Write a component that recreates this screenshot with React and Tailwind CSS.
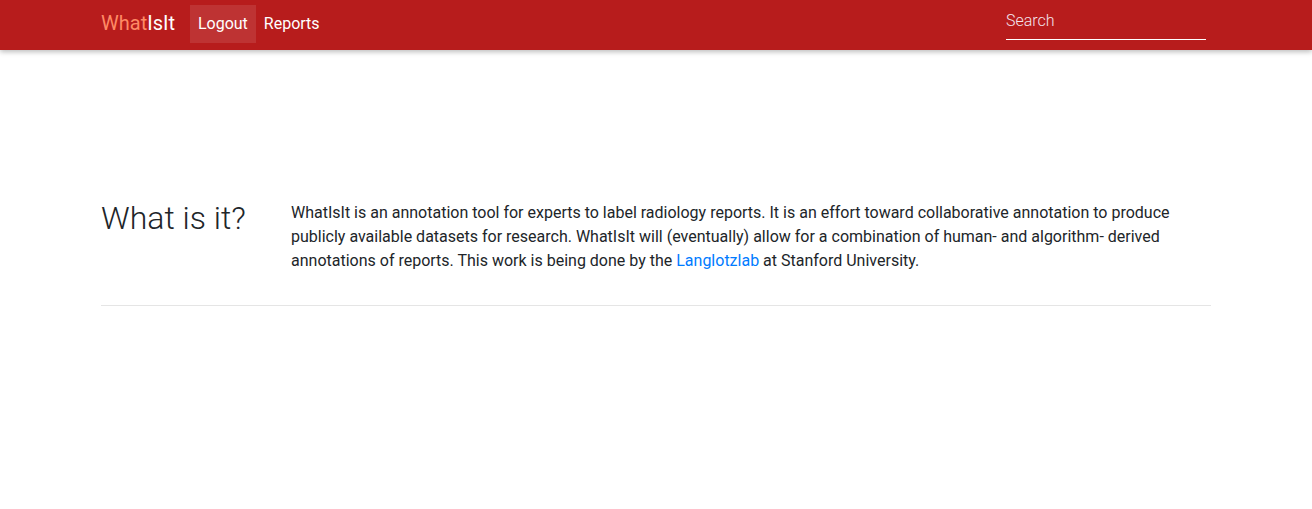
export default function App() {
  return (
    <div className="min-h-[509px] bg-white font-['Roboto',sans-serif] text-[#212529]">
      <nav className="h-[50px] bg-[#b71c1c] shadow-[0_2px_5px_rgba(0,0,0,0.26)]">
        <div className="mx-auto flex h-full w-[1140px] items-center px-[15px]">
          <a href="#" className="mr-[15px] text-[20px] leading-[30px] -mt-[4px]">
            <span className="text-[#ff8a65]">What</span>
            <span className="text-white">IsIt</span>
          </a>
          <ul className="flex items-center -mt-[3px]">
            <li>
              <a href="#" className="block bg-white/10 px-2 py-[7px] text-[16px] leading-6 text-white">
                Logout
              </a>
            </li>
            <li>
              <a href="#" className="block px-2 py-[7px] text-[16px] leading-6 text-white">
                Reports
              </a>
            </li>
          </ul>
          <div className="ml-auto -mt-[8px] mr-[5px]">
            <input
              type="text"
              placeholder="Search"
              className="w-[200px] border-b border-white bg-transparent py-[6px] text-[16px] font-light leading-6 text-white outline-none placeholder:text-[#f3e3ec]"
            />
          </div>
        </div>
      </nav>

      <main className="mx-auto w-[1140px] px-[15px] pt-[151px]">
        <div className="-mx-[15px] flex">
          <div className="w-[190px] px-[15px]">
            <h1 className="text-[32px] font-light leading-[38px] -mt-[2px] text-[#212529]">What is it?</h1>
          </div>
          <div className="w-[950px] px-[15px]">
            <p className="mb-4 text-[16px] leading-6">
              WhatIsIt is an annotation tool for experts to label radiology reports. It is an effort toward
              collaborative annotation to produce publicly available datasets for research. WhatIsIt will
              (eventually) allow for a combination of human- and algorithm- derived annotations of reports.
              This work is being done by the{" "}
              <a href="#" className="text-[#007bff]">
                Langlotzlab
              </a>{" "}
              at Stanford University.
            </p>
          </div>
        </div>
        <hr className="mt-4 border-t border-black/10" />
      </main>
    </div>
  );
}
